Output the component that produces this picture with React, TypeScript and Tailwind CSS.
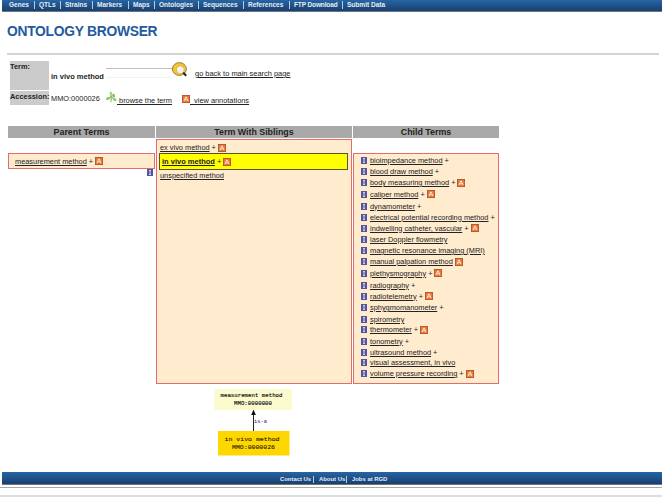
import React from "react";

const NAV: [string, string][] = [
  ["Genes", "w-[30px]"],
  ["QTLs", "w-[26px]"],
  ["Strains", "w-[32px]"],
  ["Markers", "w-[36px]"],
  ["Maps", "w-[26px]"],
  ["Ontologies", "w-[44px]"],
  ["Sequences", "w-[45px]"],
  ["References", "w-[46px]"],
  ["FTP Download", "w-[53px] tracking-[-0.15px]"],
  ["Submit Data", "w-[44px]"],
];

type Child = { name: string; plus?: boolean; ann?: boolean; h: string };

const CHILDREN: Child[] = [
  { name: "bioimpedance method", plus: true, h: "h-[11px]" },
  { name: "blood draw method", plus: true, h: "h-[11px]" },
  { name: "body measuring method", plus: true, ann: true, h: "h-[11px]" },
  { name: "caliper method", plus: true, ann: true, h: "h-[12px]" },
  { name: "dynamometer", plus: true, h: "h-[12px]" },
  { name: "electrical potential recording method", plus: true, h: "h-[10px]" },
  { name: "indwelling catheter, vascular", plus: true, ann: true, h: "h-[12px]" },
  { name: "laser Doppler flowmetry", h: "h-[11px]" },
  { name: "magnetic resonance imaging (MRI)", h: "h-[11px]" },
  { name: "manual palpation method", ann: true, h: "h-[11px]" },
  { name: "plethysmography", plus: true, ann: true, h: "h-[12px]" },
  { name: "radiography", plus: true, h: "h-[12px]" },
  { name: "radiotelemetry", plus: true, ann: true, h: "h-[10px]" },
  { name: "sphygmomanometer", plus: true, h: "h-[13px]" },
  { name: "spirometry", h: "h-[10px]" },
  { name: "thermometer", plus: true, ann: true, h: "h-[11px]" },
  { name: "tonometry", plus: true, h: "h-[12px]" },
  { name: "ultrasound method", plus: true, h: "h-[10px]" },
  { name: "visual assessment, in vivo", h: "h-[11px]" },
  { name: "volume pressure recording", plus: true, ann: true, h: "h-[11px]" },
];

function Ann() {
  return (
    <svg className="h-2 w-2 shrink-0" viewBox="0 0 8 8">
      <rect width="8" height="8" fill="#a8502c" />
      <rect x="0.7" y="0.7" width="6.6" height="6.6" fill="#ea7838" />
      <path d="M2 6.2 3.7 2h.6L6 6.2M2.8 4.8h2.4" fill="none" stroke="#fff0dc" strokeWidth="0.9" />
    </svg>
  );
}

function Info() {
  return (
    <svg className="h-[7px] w-[6px] shrink-0" viewBox="0 0 6 7">
      <rect width="6" height="7" fill="#55559c" />
      <path d="M2 1.6h2M3 1.6v3.8M2 5.4h2" fill="none" stroke="#e4e4f8" strokeWidth="0.9" />
    </svg>
  );
}

function Link({ children, bold }: { children: React.ReactNode; bold?: boolean }) {
  return (
    <a className={"underline decoration-[0.7px] underline-offset-1 " + (bold ? "font-bold" : "")}>{children}</a>
  );
}

function Term({ name, plus, ann, bold }: { name: string; plus?: boolean; ann?: boolean; bold?: boolean }) {
  return (
    <span className="flex items-center gap-[2px] whitespace-nowrap">
      <Link bold={bold}>{name}</Link>
      {plus && <span>+</span>}
      {ann && <Ann />}
    </span>
  );
}

function Heading({ children }: { children: string }) {
  return (
    <h2 className="h-[12px] bg-[#a9a9a9] text-center text-[8.85px] leading-[12px] font-bold text-[#222]">{children}</h2>
  );
}

function SearchIcon() {
  return (
    <svg className="mt-px h-4 w-4 shrink-0" viewBox="0 0 16 16">
      <ellipse cx="7.4" cy="7" rx="7" ry="6.4" fill="#f6c62c" stroke="#8d7440" strokeWidth="0.9" />
      <circle cx="8.3" cy="7.8" r="4" fill="#f2f2ec" stroke="#d6a832" strokeWidth="0.8" />
      <path d="M5.8 8a2.6 2.6 0 0 1 2.4-2.5" fill="none" stroke="#fff" strokeWidth="1" />
      <path d="m11.2 10.6 3 3.2" stroke="#222" strokeWidth="2" />
    </svg>
  );
}

function TreeIcon() {
  return (
    <svg className="h-[12px] w-[11px] shrink-0" viewBox="0 0 11 12">
      <path d="M5 1v5M5 5.5 1.5 8.5M5.2 5.5 8.5 9M5 6l.4 4" fill="none" stroke="#5c9a3a" strokeWidth="0.9" />
      <ellipse cx="4.8" cy="2.5" rx="1.3" ry="2" fill="#a5d684" />
      <ellipse cx="2" cy="7.5" rx="2" ry="1.3" fill="#8ac668" transform="rotate(-30 2 7.5)" />
      <ellipse cx="7.6" cy="4.6" rx="1.3" ry="1.9" fill="#7dbb59" transform="rotate(-25 7.6 4.6)" />
      <ellipse cx="8.8" cy="8.6" rx="1.8" ry="1.3" fill="#8cc46c" transform="rotate(30 8.8 8.6)" />
      <ellipse cx="5.2" cy="10" rx="1.1" ry="1.4" fill="#b9dda2" />
    </svg>
  );
}

function Diagram() {
  return (
    <svg className="ml-[214px] block h-[68px] w-[80px]" viewBox="0 0 80 68" fontFamily="'Liberation Mono', monospace" fontSize="6">
      <rect x="0.5" y="0" width="77.5" height="21" fill="#fafacd" />
      <text x="6.5" y="8.3" textLength="62" lengthAdjust="spacingAndGlyphs" fill="#111" stroke="#111" strokeWidth="0.15">measurement method</text>
      <text x="20" y="16.4" textLength="38" lengthAdjust="spacingAndGlyphs" fill="#111" stroke="#111" strokeWidth="0.15">MMO:0000000</text>
      <path d="M39.5 42V26" stroke="#222" strokeWidth="1" />
      <path d="m39.5 20.5-2.4 5.5h4.8z" fill="#111" />
      <text x="40" y="33.5" textLength="13" lengthAdjust="spacingAndGlyphs" fill="#40204c">is-a</text>
      <rect x="4" y="42" width="71.5" height="24.5" fill="#ffd700" />
      <text x="10.5" y="51.5" textLength="55" lengthAdjust="spacingAndGlyphs" fill="#3a2c00" stroke="#3a2c00" strokeWidth="0.15">in vivo method</text>
      <text x="18" y="60.4" textLength="43" lengthAdjust="spacingAndGlyphs" fill="#3a2c00" stroke="#3a2c00" strokeWidth="0.15">MMO:0000026</text>
    </svg>
  );
}

export default function App() {
  return (
    <div className="flex h-[497px] w-[662px] flex-col overflow-hidden bg-white font-['Liberation_Sans',Arial,sans-serif] text-[7.38px] leading-[9px] text-[#222]">
      <nav className="ml-[2px] flex h-[12px] shrink-0 border-b border-[#6d7580] bg-linear-to-b from-[#2665a4] to-[#193f70] pl-[7px] text-[6.55px] leading-[10px] font-bold text-[#e6edf4]">
        {NAV.map(([name, w], i) => (
          <div key={name} className={"flex shrink-0 whitespace-nowrap " + w}>
            <a className="flex-1">{name}</a>
            {i < NAV.length - 1 && <span className="mt-px mr-[4px] h-2 w-px bg-[#b9cbdc]" />}
          </div>
        ))}
      </nav>

      <h1 className="mt-[12px] ml-[7px] h-[16px] shrink-0 text-[13.8px] leading-[16px] font-bold tracking-[-0.25px] text-[#235a9d]">ONTOLOGY BROWSER</h1>
      <hr className="mt-[13px] mr-[3px] ml-[7px] h-[2px] shrink-0 border-0 bg-[#d4d4d4]" />

      <section className="mt-[6px] ml-[10px] h-[65px] shrink-0">
        <div className="flex h-[30px]">
          <div className="h-[29px] w-[39px] bg-[#cbcbcb] pt-[1px] font-bold">Term:</div>
          <div className="mt-[11px] ml-[2px] w-[55px] text-[7.5px] font-bold whitespace-nowrap">in vivo method</div>
          <div className="mt-[7px] h-[10px] w-[66px] border-t border-b border-t-[#c0c0c0] border-b-[#f2f2f2]" />
          <SearchIcon />
          <div className="mt-[8px] ml-[7px] text-[7.45px]">
            <Link>go back to main search page</Link>
          </div>
        </div>
        <div className="flex h-[14px]">
          <div className="h-[14px] w-[39px] bg-[#cbcbcb] pt-[1px] font-bold whitespace-nowrap">Accession:</div>
          <div className="mt-[3px] ml-[2px] w-[55px]">MMO:0000026</div>
          <TreeIcon />
          <div className="mt-[5px] w-[65px] whitespace-pre">
            <Link>{" browse the term"}</Link>
          </div>
          <div className="mt-[4px] flex whitespace-pre">
            <Ann />
            <div className="mt-px">
              <Link>{"  view annotations"}</Link>
            </div>
          </div>
        </div>
      </section>

      <section className="ml-[8px] flex h-[258px] shrink-0 gap-[1px]">
        <div className="w-[147px]">
          <Heading>Parent Terms</Heading>
          <div className="mt-[15px] flex h-[16px] items-center border border-[#e76b6b] bg-[#ffebcd] pl-[6px]">
            <Term name="measurement method" plus ann />
          </div>
          <div className="mr-[2px] flex justify-end">
            <Info />
          </div>
        </div>
        <div className="w-[196px]">
          <Heading>Term With Siblings</Heading>
          <div className="mt-px h-[245px] border border-[#e76b6b] bg-[#ffebcd] pt-[3px] pr-[3px] pl-[2px]">
            <div className="h-[10px] pl-px">
              <Term name="ex vivo method" plus ann />
            </div>
            <div className="flex h-[17px] items-center border border-[#55552a] bg-[#ffff00] pl-[2px] text-[7.5px]">
              <Term name="in vivo method" plus ann bold />
            </div>
            <div className="pt-px pl-px">
              <Term name="unspecified method" />
            </div>
          </div>
        </div>
        <div className="w-[146px]">
          <Heading>Child Terms</Heading>
          <div className="mt-[15px] h-[231px] border border-[#e76b6b] bg-[#ffebcd] pt-px pl-[7px]">
            {CHILDREN.map((c) => (
              <div key={c.name} className={"flex items-center gap-[3px] " + c.h}>
                <Info />
                <Term name={c.name} plus={c.plus} ann={c.ann} />
              </div>
            ))}
          </div>
        </div>
      </section>

      <div className="mt-[5px] h-[83px] shrink-0">
        <Diagram />
      </div>

      <footer className="ml-[2px] flex h-[13px] shrink-0 items-center border-b border-[#6d7580] bg-linear-to-b from-[#2665a4] to-[#193f70] pt-[2px] pl-[278px] text-[5.9px] leading-[9px] font-bold whitespace-nowrap text-[#e6edf4]">
        <a className="w-[33px]">Contact Us</a>
        <span className="mr-[5px] h-[7px] w-px bg-[#b9cbdc]" />
        <a className="w-[27px]">About Us</a>
        <span className="mr-[5px] h-[7px] w-px bg-[#b9cbdc]" />
        <a>Jobs at RGD</a>
      </footer>
      <div className="mt-[2px] h-px shrink-0 bg-[#a9a9a5]" />
      <div className="mt-[7px] h-[2px] shrink-0 bg-[#dedede]" />
    </div>
  );
}
